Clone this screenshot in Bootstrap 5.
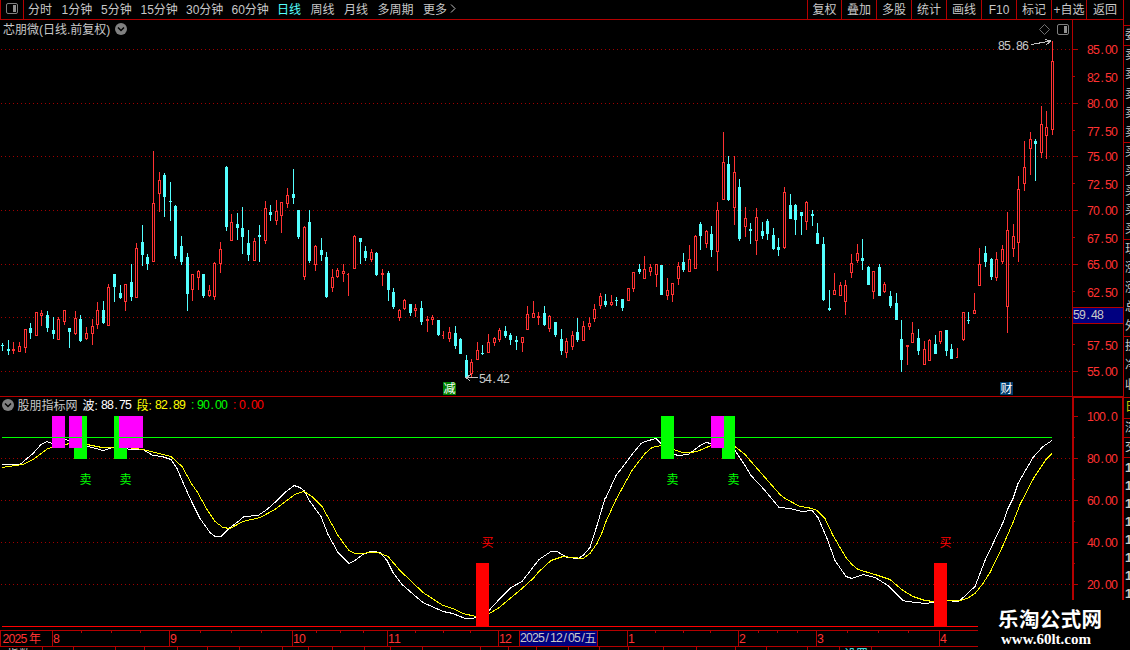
<!DOCTYPE html>
<html lang="zh-CN">

<head>
  <meta charset="UTF-8" />
  <title>芯朋微 日线</title>
  <meta name="viewport" content="width=device-width, initial-scale=1" />
  <link href="https://cdn.jsdelivr.net/npm/bootstrap@5.3.0/dist/css/bootstrap.min.css" rel="stylesheet" />

  <style>
    body {
      width: 1130px;
      height: 650px;
      background-color: #000;
      color: #c8c8c8;
      font-family: 'Liberation Sans', 'Noto Sans CJK SC', sans-serif;
      font-size: 12px;
      line-height: 20px;
    }

    svg {
      display: block;
    }

    svg text {
      white-space: pre;
    }

    .main-area {
      width: 1124px;
    }

    .top-bar {
      height: 20px;
      border: solid #b40000;
      border-width: 0 1px 1px;
    }

    .panel-toggle {
      width: 23px;
      border-right: 1px solid #b40000;
    }

    .periods {
      gap: 9.5px;
      padding-left: 4px;
      white-space: nowrap;
    }

    .periods .min-1 {
      width: 30px;
    }

    .periods .min-2 {
      width: 36px;
    }

    .periods .active {
      color: #54ffff;
    }

    .tools span {
      width: 35px;
      border-left: 1px solid #b40000;
      text-align: center;
      white-space: nowrap;
    }

    .tools span:first-child {
      width: 34px;
    }

    .tools span:last-child {
      width: 37px;
    }

    .chart-title {
      left: 3px;
      top: 0;
      gap: 5px;
    }

    .chart-tools {
      right: 55px;
      top: 3px;
      gap: 7px;
    }

    .side-quotes {
      width: 6px;
      height: 600px;
    }

    .side-quotes div {
      border-bottom: 1px solid #b40000;
      padding-left: 1px;
      flex: none;
      overflow: hidden;
    }

    .side-quotes span {
      display: block;
      width: 24px;
      height: 19.3px;
      line-height: 19.3px;
    }

    .side-quotes .ticks-list {
      border: 0;
      font-weight: bold;
      font-size: 13px;
    }

    .side-quotes .ticks-list span {
      height: 18px;
    }

    .site-mark {
      right: 0;
      bottom: 0;
      width: 152px;
      height: 50px;
      background-color: #000;
    }
  </style>
</head>

<body class="position-relative overflow-hidden d-flex">

  <div class="main-area d-flex flex-column">
    <nav class="top-bar d-flex">
      <div class="panel-toggle d-flex justify-content-center">
        <svg width="14" height="18" viewBox="0 0 14 18">
          <rect x="1.5" y="3.5" width="11" height="10" rx="1.5" fill="none" stroke="#808080" />
          <rect x="8" y="5" width="3" height="7" fill="#909090" />
        </svg>
      </div>
      <div class="periods d-flex">
        <span>分时</span><span class="min-1">1分钟</span><span class="min-1">5分钟</span><span class="min-2">15分钟</span><span class="min-2">30分钟</span><span class="min-2">60分钟</span>
        <span class="active">日线</span><span>周线</span><span>月线</span><span>多周期</span>
        <span class="d-flex">更多
          <svg width="10" height="18" viewBox="0 0 10 18">
            <path d="M4 4.5l4 4-4 4" fill="none" stroke="#c0c0c0" />
          </svg>
        </span>
      </div>
      <div class="tools d-flex ms-auto">
        <span>复权</span><span>叠加</span><span>多股</span><span>统计</span><span>画线</span><span>F10</span><span>标记</span><span>+自选</span><span>返回</span>
      </div>
    </nav>

    <section class="position-relative">
      <svg id="priceChart" width="1124" height="377" viewBox="0 20 1124 377" shape-rendering="crispEdges"></svg>
      <div class="chart-title position-absolute d-flex">
        <span>芯朋微(日线.前复权)</span>
        <svg width="12" height="18" viewBox="0 0 12 18">
          <circle cx="6" cy="9" r="6" fill="#808080" />
          <path d="M3 7.5l3 3 3-3" fill="none" stroke="#000" stroke-width="1.5" />
        </svg>
      </div>
      <div class="chart-tools position-absolute d-flex">
        <svg width="11" height="13" viewBox="0 0 11 13">
          <path d="M5.5 1.5l5 5-5 5-5-5z" fill="none" stroke="#707070" />
        </svg>
        <svg width="12" height="13" viewBox="0 0 12 13">
          <rect x=".5" y="1.5" width="11" height="10" rx="1.5" fill="none" stroke="#808080" />
          <rect x="7" y="3" width="3" height="7" fill="#909090" />
        </svg>
      </div>
    </section>

    <svg id="waveChart" width="1124" height="233" viewBox="0 397 1124 233" shape-rendering="crispEdges"></svg>
    <svg id="timeAxis" width="1124" height="20" viewBox="0 630 1124 20" shape-rendering="crispEdges"></svg>
  </div>

  <aside class="side-quotes overflow-hidden d-flex flex-column">
    <div style="height: 26px"></div>
    <div style="height: 20px"><span>委比</span></div>
    <div style="height: 97px"><span>卖五</span><span>卖四</span><span>卖三</span><span>卖二</span><span>卖一</span></div>
    <div style="height: 97px"><span>买一</span><span>买二</span><span>买三</span><span>买四</span><span>买五</span></div>
    <div style="height: 97px"><span>现价</span><span>涨跌</span><span>涨幅</span><span>总量</span><span>外盘</span></div>
    <div style="height: 61px"><span>换手</span><span>净资</span><span>收益</span></div>
    <div style="height: 21px; color: #c8c800"><span>日线</span></div>
    <div style="height: 19px"><span>深股</span></div>
    <div style="height: 20px"><span>交易</span></div>
    <div class="ticks-list"><span>14</span><span>14</span><span>14</span><span>14</span><span>14</span><span>14</span><span>14</span><span>14</span></div>
  </aside>

  <div class="site-mark position-absolute">
    <svg width="152" height="50" viewBox="978 600 152 50" fill="#fff">
      <text x="998" y="627" font-family="Noto Sans CJK SC, sans-serif" font-weight="bold" font-size="20.5" textLength="104">乐淘公式网</text>
      <text x="1001" y="644" font-family="Liberation Serif, serif" font-weight="bold" font-size="14.5" textLength="90" lengthAdjust="spacingAndGlyphs">www.60lt.com</text>
    </svg>
  </div>

  <script>
    // x, high, body top, body bottom, low, up(1) / down(0)
    const candles = [
      [2,343,345,346,351,0],[8,340,349,351,355,0],[13,342,349,351,354,1],[19,342,346,352,352,1],[25,329,329,348,353,1],
      [30,323,328,333,339,0],[36,312,312,336,336,1],[41,310,313,316,326,1],[47,311,315,328,332,0],[53,317,330,334,339,0],
      [58,317,319,340,340,1],[64,310,310,322,325,1],[69,328,328,332,348,0],[75,311,318,334,335,1],[80,315,319,341,342,0],
      [86,327,333,339,340,1],[92,319,326,334,345,1],[97,302,310,325,329,1],[103,301,310,323,324,0],[108,284,287,326,326,1],
      [114,274,274,287,302,0],[120,285,293,298,299,0],[125,284,284,302,311,1],[131,264,282,297,301,0],[136,243,248,298,298,1],
      [142,225,242,255,266,0],[147,254,257,264,270,0],[153,151,203,262,262,1],[159,172,180,194,212,1],[164,173,175,197,217,0],
      [170,182,201,202,221,0],[175,205,206,256,259,0],[181,236,246,262,265,0],[187,253,257,294,311,0],[192,274,274,290,301,1],
      [198,270,271,278,290,1],[203,274,274,296,298,0],[209,285,290,296,297,1],[214,262,263,297,300,1],[220,242,249,264,273,1],
      [226,166,167,227,231,0],[231,214,222,241,241,1],[237,213,224,228,240,0],[242,207,228,237,254,0],[248,230,243,255,261,0],
      [254,238,241,261,261,1],[259,225,235,237,262,0],[265,201,208,241,244,1],[270,205,212,215,221,0],[276,200,211,221,225,1],
      [281,202,202,216,233,1],[287,188,195,204,208,1],[293,169,194,198,204,0],[298,210,210,237,239,0],[304,226,227,277,280,1],
      [309,210,222,261,263,0],[315,245,246,265,271,1],[321,238,250,255,261,0],[326,252,257,297,298,0],[332,269,277,288,292,1],
      [337,268,270,277,278,1],[343,264,271,274,282,1],[348,273,274,275,296,1],[354,235,236,269,269,1],[360,238,238,242,264,0],
      [365,246,251,258,261,0],[371,249,252,260,262,1],[376,252,253,275,276,0],[382,269,273,275,286,1],[388,271,273,290,301,0],
      [393,288,292,307,309,0],[399,309,310,318,321,1],[404,299,300,309,310,1],[410,304,304,313,316,0],[415,304,308,311,317,1],
      [421,301,308,322,325,0],[427,316,319,321,332,1],[432,315,317,320,325,1],[438,320,320,335,336,0],[443,331,335,336,339,1],
      [449,327,332,339,342,1],[455,326,333,346,349,0],[460,338,339,354,354,0],[466,355,360,377,377,0],[471,359,362,374,377,1],
      [477,342,350,360,360,1],[482,345,353,354,355,0],[488,334,342,353,353,1],[494,337,338,343,346,1],[499,328,330,340,342,1],
      [505,326,331,336,338,0],[510,333,335,340,345,0],[516,336,340,342,350,0],[522,337,337,343,352,1],[527,306,314,330,330,1],
      [533,301,313,318,318,1],[538,312,316,318,325,1],[544,306,313,325,326,0],[549,315,316,329,332,1],[555,322,322,335,337,0],
      [561,329,339,351,355,0],[566,338,341,353,358,1],[572,331,335,347,350,1],[577,318,332,340,342,0],[583,321,326,341,341,1],
      [589,317,323,327,330,1],[594,304,309,319,322,1],[600,293,296,306,309,1],[605,294,301,305,307,0],[611,295,302,305,306,1],
      [616,297,300,301,306,0],[622,299,299,308,311,0],[628,288,288,301,301,1],[633,272,272,289,292,1],[639,264,269,272,274,0],
      [644,256,269,279,279,1],[650,264,267,272,276,1],[656,264,264,275,287,1],[661,265,265,295,295,0],[667,278,290,296,300,1],
      [672,283,283,295,302,1],[678,262,266,279,285,1],[683,253,262,270,272,0],[689,245,259,272,272,1],[695,235,236,269,269,1],
      [700,222,224,236,250,0],[706,230,231,244,248,1],[711,226,234,250,257,0],[717,202,210,252,271,1],[723,132,162,200,200,1],
      [728,156,164,200,201,0],[734,156,172,208,225,1],[739,179,187,239,241,0],[745,207,218,227,237,1],[750,223,229,231,244,0],
      [756,208,217,241,255,1],[762,222,231,236,239,0],[767,219,221,234,240,0],[773,228,235,249,250,0],[778,238,247,250,256,0],
      [784,187,192,248,249,1],[790,194,205,219,219,0],[795,204,205,220,235,0],[801,212,212,216,235,0],[806,201,202,222,230,1],
      [812,210,214,216,226,0],[817,223,233,244,244,0],[823,237,244,300,301,0],[829,290,308,310,311,0],[834,273,290,295,295,1],
      [840,282,285,296,296,1],[845,280,285,302,315,1],[851,254,263,273,278,1],[857,244,253,261,263,1],[862,239,258,261,270,0],
      [868,266,267,285,285,0],[873,271,271,292,299,1],[879,264,267,296,296,0],[884,282,284,292,293,1],[890,291,296,306,308,0],
      [896,293,303,320,320,0],[901,320,339,360,372,0],[907,345,345,347,365,1],[912,322,333,343,343,1],[918,329,338,351,355,0],
      [924,341,349,365,365,1],[929,339,340,361,361,1],[935,335,344,354,354,0],[940,331,331,342,344,1],[946,330,330,351,356,0],
      [951,344,349,359,359,0],[957,348,357,358,358,1],[963,312,312,340,341,1],[968,312,320,321,324,0],[974,293,310,314,314,1],
      [979,248,264,286,286,1],[985,246,253,262,267,0],[991,258,259,277,280,0],[996,252,259,278,281,1],[1002,245,249,262,264,1],
      [1007,212,230,307,333,1],[1013,224,236,249,257,1],[1018,176,189,243,262,1],[1024,141,167,184,191,1],[1030,132,139,149,175,1],
      [1035,139,141,144,181,0],[1041,106,124,153,158,1],[1046,111,127,136,159,1],[1052,41,61,130,135,1]
    ];

    const wave = '2,464 20,464 33,453 41,444 47,441 52,443 60,442 66,439 70,441 80,443 88,446 96,448 103,450 110,448 115,446 123,447 130,449 143,449 153,455 162,456 171,459 177,468 183,482 192,502 200,518 210,532 215,536 221,536 229,528 237,522 244,516 258,515 267,509 277,500 285,492 294,485 300,487 304,490 310,501 321,516 328,534 338,552 349,563 355,560 363,554 371,550.5 380,552 387,560 393,572 402,584 417,597 423,602 443,611 453,613 465,618 472,618 476,617 489,610 500,598 511,587 522,581 539,559 551,551 557,551 567,557 578,558 583,555 590,547 597,525 605,498 606,497 616,475 623,466 632,454 641,443 645,441 656,438 661,443 674,454 679,455 688,454 695,449 700,445 706,442 711,443 724,445 735,450 745,465 751,475 765,490 779,507 790,508 802,511 812,510 818,517 827,538 835,560 846,576 852,578 863,574 875,577 888,585 903,600 907,601 925,603 934,602 947,599.5 957,601.5 960,600 975,586 985,560 1003,522 1008,508 1013,498 1018,483 1033,457 1043,446 1052,440';
    const segment = '2,467 23,464 33,459 48,448 52,447 66,444 69,443 78,442 87,444 102,447 114,447 127,447 143,449 163,454 171,456 182,466 192,484 197,491 207,509 215,521 223,527 230,528 243,521 260,517 275,509 287,500 295,494 300,492 304,491 312,496 322,506 327,515 332,524 338,535 349,550 355,553 378,552 388,556 400,570 423,592 443,605 453,608 463,613 476,616 489,613 498,608 522,588 533,578 539,571 551,560 563,556 583,558 590,553 597,543 602,532 606,521 616,499 632,470 645,453 652,447 661,445 674,449 682,452 690,452 697,451 711,445 724,443 735,446 745,454 751,461 765,477 780,494 785,498 800,506 807,507 812,508 817,510 825,518 833,535 846,557 852,564 858,569 875,574 890,579 903,590 913,596 925,600 934,601 947,600.5 960,600 967,598 975,593 983,583 990,572 1003,545 1013,522 1020,504 1034,477 1046,459 1052,453';

    const rect = (x, y, w, h, fill) => `<rect x="${x}" y="${y}" width="${w}" height="${h}" fill="${fill}"/>`;
    const label = (x, y, s, fill) => `<text x="${x}" y="${y}" font-size="12" fill="${fill}">${s}</text>`;

    // numbers sit on a fixed 6px pitch
    function num(x, y, s, fill) {
      const xs = [...s].map((c, i) => x + i * 6 + (c === '.' || c === '/' ? 1.5 : 0)).join(' ');
      return `<text x="${xs}" y="${y}" font-size="12.3" fill="${fill}">${s}</text>`;
    }

    function grid(rows) {
      return rows.map(y => `<path d="M1 ${y + 0.5}H1071" stroke="#a00000" stroke-dasharray="1 3"/>`).join('');
    }

    function drawPrice() {
      const red = '#b40000';
      let s = grid([49, 103, 156, 210, 264, 317, 371]);
      for (const [x, high, top, bottom, low, up] of candles) {
        const color = up ? '#ff3232' : '#54ffff';
        if (up && bottom - top > 2) {
          s += rect(x, high, 1, top - high, color) + rect(x, bottom, 1, low - bottom, color);
          s += rect(x - 1, top, 3, bottom - top, color) + rect(x, top + 1, 1, bottom - top - 2, '#000');
        } else {
          s += rect(x, high, 1, low - high, color) + rect(x - 1, top, bottom - top === 1 && up ? 2 : 3, bottom - top, color);
        }
      }
      s += rect(1072, 20, 1, 377, red) + rect(1123, 20, 1, 377, red) + rect(0, 396, 1124, 1, red);
      [49, 103, 156, 210, 264, 371].forEach(y => s += rect(1073, y, 5, 1, red));
      [76, 130, 183, 237, 291, 344].forEach(y => s += rect(1073, y, 2, 1, red));
      const prices = { '85.00': 54, '82.50': 82, '80.00': 108, '77.50': 136, '75.00': 161, '72.50': 189, '70.00': 215, '67.50': 243, '65.00': 269, '62.50': 297, '57.50': 350, '55.00': 376 };
      for (const p in prices) s += num(1087, prices[p], p, '#ff3232');

      s += rect(1073, 307, 50, 17, red) + rect(1073, 308, 50, 15, '#000080') + num(1073, 319, '59.48', '#c8c8c8');
      s += num(998, 50, '85.86', '#c8c8c8') + num(479, 383, '54.42', '#c8c8c8');
      s += '<path d="M1031 44.5L1051 41M1045 39.5L1051 41L1046 45M478 377.5H466M471 374.5L466 377.5L470 381" fill="none" stroke="#c0c0c0"/>';
      s += '<path d="M443 382h11l2 2v11h-13z" fill="#008000"/><path d="M1000 382h13v13h-13z" fill="#003c6c"/>';
      s += label(443.5, 393, '减', '#fff') + label(1000.5, 393, '财', '#fff');
      document.getElementById('priceChart').innerHTML = s;
    }

    function drawWave() {
      const red = '#b40000';
      let s = grid([458, 500, 542, 584]);
      s += `<polyline points="${wave}" fill="none" stroke="#fff" transform="translate(0 .5)"/>`;
      s += `<polyline points="${segment}" fill="none" stroke="#ff0" transform="translate(0 .5)"/>`;
      s += [74, 114, 661, 722].map(x => rect(x, 416, 13, 43, '#00ff00')).join('');
      s += rect(52, 416, 13, 32, '#ff00ff') + rect(69, 416, 13, 32, '#ff00ff') + rect(119, 416, 24, 32, '#ff00ff') + rect(711, 416, 13, 32, '#ff00ff');
      s += rect(2, 437, 1050, 1, '#00ff00') + rect(2, 626, 1050, 1, '#ff0000');
      s += rect(476, 563, 13, 64, '#ff0000') + rect(934, 563, 13, 64, '#ff0000');
      s += [80, 120, 667, 728].map(x => label(x - 0.5, 484, '卖', '#00ff00')).join('');
      s += label(481.5, 547, '买', '#ff0000') + label(939.5, 547, '买', '#ff0000');

      s += rect(1072, 397, 2, 233, red) + rect(1122, 397, 2, 233, red) + rect(1072, 397, 52, 1, red);
      [416, 458, 500, 542, 584].forEach(y => s += rect(1074, y, 4, 1, red));
      [437, 479, 521, 563].forEach(y => s += rect(1074, y, 1, 1, red));
      [['100.0', 421], ['80.00', 463], ['60.00', 505], ['40.00', 547], ['20.00', 589]].forEach(([t, y]) => s += num(1087, y, t, '#ff3232'));

      s += '<g shape-rendering="auto"><circle cx="8" cy="405" r="6" fill="#808080"/><path d="M5 403.5l3 3 3-3" fill="none" stroke="#000" stroke-width="1.5"/></g>';
      s += label(17.5, 409.5, '股朋指标网', '#c8c8c8') + label(82.5, 409.5, '波:', '#fff') + num(101, 409, '88.75', '#fff');
      s += label(136.5, 409.5, '段:', '#ff0') + num(155, 409, '82.89', '#ff0');
      s += label(191, 409, ':', '#00ff00') + num(197, 409, '90.00', '#00ff00') + label(233, 409, ':', '#ff0000') + num(239, 409, '0.00', '#ff0000');
      document.getElementById('waveChart').innerHTML = s;
    }

    function drawTimeAxis() {
      const red = '#b40000';
      let s = rect(0, 630, 978, 1, red) + rect(0, 646, 978, 1, red) + rect(0, 630, 1, 17, red);
      [81, 111, 140, 200, 231, 261, 316, 340, 363, 415, 443, 470, 655, 683, 710, 758, 777, 797, 847, 878, 908].forEach(x => s += rect(x, 631, 1, 2, red));
      [42, 73, 115, 144, 177, 207, 239, 282, 308, 332, 364, 390, 422, 480, 508, 536, 568, 599, 628, 663, 696, 735, 766, 807, 839, 871].forEach(x => s += rect(x, 647, 1, 3, red));
      s += num(2.5, 643, '2025', '#ff3232') + label(29, 643, '年', '#ff3232');
      [[52, '8'], [169, '9'], [292, '10'], [387, '11'], [498, '12'], [627, '1'], [738, '2'], [816, '3'], [939, '4']].forEach(([x, m]) => {
        s += rect(x, 630, 1, 17, red) + num(x + 1, 643, m, '#ff3232');
      });
      s += rect(519, 631, 79, 15, '#000080') + rect(519, 630, 1, 17, red) + rect(597, 630, 1, 17, red);
      s += num(520, 642, '2025/12/05/', '#c8c8c8') + label(584.5, 642.5, '五', '#c8c8c8');
      // top edge of the status line
      s += label(7, 659, '指数', '#c0c0c0') + label(844, 659, '设置', '#54ffff');
      document.getElementById('timeAxis').innerHTML = s;
    }

    drawPrice();
    drawWave();
    drawTimeAxis();
  </script>

  <script src="https://cdn.jsdelivr.net/npm/bootstrap@5.3.0/dist/js/bootstrap.bundle.min.js"></script>
</body>

</html>
